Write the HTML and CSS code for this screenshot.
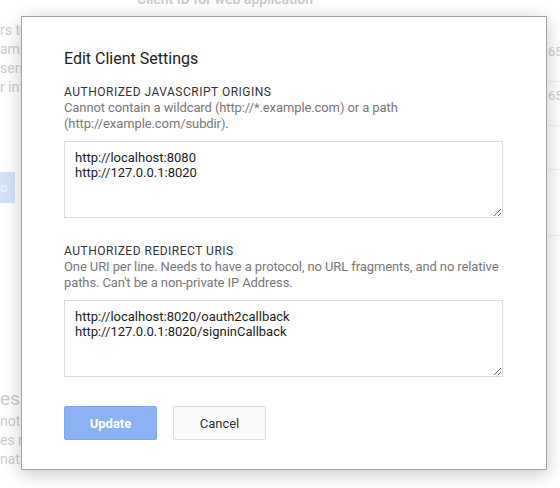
FILE: index.html
```html
<!DOCTYPE html>
<html>
<head>
<meta charset="utf-8">
<link rel="stylesheet" href="styles.css">
</head>
<body>
<div class="page">
  <div class="page-head">Client ID for web application</div>
  <div class="page-body">
    <div class="left">
      <div class="frag-group">
        <p class="frag">rs to this project</p>
        <p class="frag">amp</p>
        <p class="frag">serna</p>
        <p class="frag">r info</p>
      </div>
      <div class="bg-btn">o</div>
      <div class="frag-bottom">
        <p class="frag big">ess</p>
        <p class="frag">not r</p>
        <p class="frag">es n</p>
        <p class="frag">nation, and is not</p>
      </div>
    </div>
    <div class="right">
      <div class="row">65</div>
      <div class="row">65</div>
      <div class="row"></div>
      <div class="row tall"></div>
    </div>
  </div>
</div>

<div class="dialog">
  <h1 class="title">Edit Client Settings</h1>
  <section class="field">
    <div class="label">AUTHORIZED JAVASCRIPT ORIGINS</div>
    <div class="desc">Cannot contain a wildcard (http://*.example.com) or a path<br>(http://example.com/subdir).</div>
    <textarea class="box">http://localhost:8080
http://127.0.0.1:8020</textarea>
  </section>
  <section class="field second">
    <div class="label">AUTHORIZED REDIRECT URIS</div>
    <div class="desc">One URI per line. Needs to have a protocol, no URL fragments, and no relative<br>paths. Can't be a non-private IP Address.</div>
    <textarea class="box">http://localhost:8020/oauth2callback
http://127.0.0.1:8020/signinCallback</textarea>
  </section>
  <div class="actions">
    <button class="btn primary">Update</button>
    <button class="btn">Cancel</button>
  </div>
</div>
</body>
</html>
```

FILE: styles.css
```css
html, body {
  margin: 0;
  padding: 0;
  background: #fff;
  width: 560px;
  height: 488px;
  overflow: hidden;
  font-family: Roboto, "Noto Sans", Arial, sans-serif;
}

.page {
  position: relative;
  height: 488px;
  color: #cfcfcf;
}

.page-head {
  margin-top: -10px;
  padding-left: 137px;
  font-size: 14px;
  font-weight: 500;
  line-height: 18px;
  color: #c8c8c8;
}

.page-body {
  display: flex;
  justify-content: space-between;
}

.left {
  width: 120px;
  display: flex;
  flex-direction: column;
}

.frag-group {
  margin-top: 13px;
}

.frag {
  margin: 0;
  font-size: 14px;
  line-height: 19px;
  white-space: nowrap;
  color: #cdcdcd;
}

.bg-btn {
  margin-top: 75px;
  width: 15px;
  height: 31px;
  background: #d3e2fb;
  color: #f1f6ff;
  font-size: 13px;
  line-height: 31px;
  overflow: hidden;
}

.frag-bottom {
  margin-top: 186px;
}

.frag.big {
  font-size: 19px;
  line-height: 34px;
  margin-bottom: 4px;
}

.frag-bottom .frag {
  line-height: 19px;
}

.right {
  width: 12px;
  margin-top: 30px;
}

.row {
  height: 44px;
  border-bottom: 1px solid #f0f0f0;
  font-size: 13px;
  line-height: 28px;
  color: #cccccc;
  box-sizing: border-box;
}

.row.tall {
  height: 66px;
}

.dialog {
  position: absolute;
  left: 21px;
  top: 16px;
  width: 526px;
  height: 454px;
  box-sizing: border-box;
  background: #fff;
  border: 1px solid #a3a3a3;
  box-shadow: 0 4px 18px rgba(0, 0, 0, 0.22);
  padding: 30px 43px 0 42px;
  color: #222;
}

.title {
  margin: 0;
  font-size: 16px;
  font-weight: 400;
  line-height: 24px;
  color: #212121;
}

.field {
  margin-top: 13px;
  display: flex;
  flex-direction: column;
}

.field.second {
  margin-top: 25px;
}

.label {
  font-size: 12px;
  line-height: 16px;
  letter-spacing: 0.5px;
  color: #333;
}

.desc {
  font-size: 13px;
  line-height: 16px;
  color: #787878;
  white-space: nowrap;
  letter-spacing: -0.1px;
}

.box {
  margin-top: 9px;
  width: 439px;
  height: 77px;
  box-sizing: border-box;
  border: 1px solid #dcdcdc;
  border-radius: 0;
  padding: 8px 10px;
  font-family: Roboto, "Noto Sans", Arial, sans-serif;
  font-size: 13px;
  line-height: 15px;
  color: #222;
  background: #fff;
  resize: vertical;
  outline: none;
  overflow: hidden;
}

.actions {
  margin-top: 29px;
  display: flex;
  gap: 16px;
}

.btn {
  width: 93px;
  height: 34px;
  box-sizing: border-box;
  border: 1px solid #dcdcdc;
  border-radius: 2px;
  background: #fafafa;
  font-family: Roboto, "Noto Sans", Arial, sans-serif;
  font-size: 13px;
  color: #333;
  padding: 0;
}

.btn.primary {
  background: #8ab2f5;
  border-color: #7ea8f0;
  color: #fff;
  font-weight: 700;
}
```
